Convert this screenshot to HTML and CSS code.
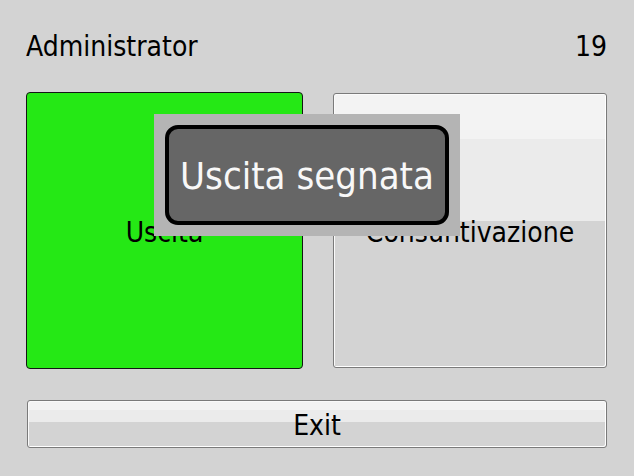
FILE: index.html
```html
<!DOCTYPE html>
<html>
<head>
<meta charset="utf-8">
<link rel="stylesheet" href="styles.css">
</head>
<body>
<div class="screen">
  <div class="header">
    <span class="user">Administrator</span>
    <span class="count">19</span>
  </div>
  <div class="cards">
    <div class="card card-green">Uscita</div>
    <div class="card card-plain">Consuntivazione</div>
  </div>
  <div class="exit">Exit</div>
  <div class="toast">
    <div class="toast-inner">Uscita segnata</div>
  </div>
</div>
</body>
</html>
```
FILE: styles.css
```css
html, body {
  margin: 0;
  padding: 0;
  background: #d3d3d3;
}
.screen {
  position: relative;
  width: 634px;
  height: 476px;
  box-sizing: border-box;
  padding: 30px 27px 0 26px;
  background: #d3d3d3;
  font-family: "DejaVu Sans Condensed", "DejaVu Sans", sans-serif;
  font-stretch: condensed;
  font-size: 28px;
  line-height: 34px;
  color: #000;
}
.header {
  display: flex;
  justify-content: space-between;
  height: 34px;
}
.cards {
  display: grid;
  grid-template-columns: 277px 274px;
  column-gap: 30px;
  margin-top: 28px;
  height: 277px;
}
.card {
  display: flex;
  align-items: center;
  justify-content: center;
  box-sizing: border-box;
  padding-top: 4px;
}
.card-green {
  background: #25e815;
  border: 1px solid #151515;
  border-radius: 4px;
}
.card-plain {
  align-self: center;
  height: 275px;
  border: 1px solid #7a7a7a;
  border-radius: 3px;
  background: linear-gradient(to bottom, #f3f3f3 0, #f3f3f3 45px, #ebebeb 45px, #ebebeb 127px, #d3d3d3 127px, #d3d3d3 100%);
  box-shadow: inset -1px -1px 0 #ffffff, inset 1px 1px 0 #fafafa;
}
.exit {
  margin: 31px 0 0 1px;
  height: 48px;
  box-sizing: border-box;
  padding-top: 4px;
  display: flex;
  align-items: center;
  justify-content: center;
  border: 1px solid #7a7a7a;
  border-radius: 3px;
  background: linear-gradient(to bottom, #f3f3f3 0, #f3f3f3 9px, #ebebeb 9px, #ebebeb 21px, #d3d3d3 21px, #d3d3d3 100%);
  box-shadow: inset -1px -1px 0 #ffffff, inset 1px 1px 0 #fafafa;
}
.toast {
  position: absolute;
  left: 154px;
  top: 114px;
  width: 306px;
  height: 122px;
  box-sizing: border-box;
  padding: 11px;
  background: #b4b4b4;
}
.toast-inner {
  height: 100%;
  box-sizing: border-box;
  border: 4px solid #000;
  border-radius: 13px;
  background: #666666;
  color: #f8f8f8;
  font-size: 38px;
  line-height: 46px;
  display: flex;
  align-items: center;
  justify-content: center;
  padding-top: 2px;
}
```
